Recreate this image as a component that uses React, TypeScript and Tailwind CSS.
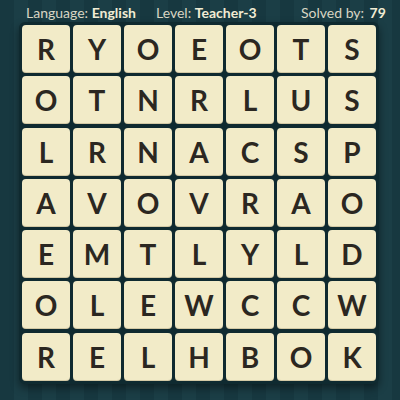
const rows = [
  "RYOEOTS",
  "OTNRLUS",
  "LRNACSP",
  "AVOVRAO",
  "EMTLYLD",
  "OLEWCCW",
  "RELHBOK",
];

export default function App() {
  return (
    <div
      className="w-[400px] h-[400px] overflow-hidden bg-[repeating-linear-gradient(90deg,#173840_0px,#173840_14px,#1b3e46_14px,#1b3e46_28px)] text-[#d9d5c3]"
      style={{ fontFamily: "Lato, 'Open Sans', sans-serif" }}
    >
      {/* Header */}
      <div className="h-[24px] flex items-center pl-[26px] text-[14px] leading-none pt-[2px] whitespace-nowrap">
        <span className="w-[130px]">
          Language: <b className="font-bold text-[#f1ecd4]">English</b>
        </span>
        <span className="w-[145px]">
          Level: <b className="font-bold text-[#f1ecd4]">Teacher-3</b>
        </span>
        <span>
          Solved by: <b className="font-bold text-[#f1ecd4] ml-[2px]">79</b>
        </span>
      </div>

      {/* Board */}
      <div className="ml-[19px] mt-[-2px] w-[360px] p-[3px] rounded-[6px] bg-[#0f2a30] shadow-[0_4px_8px_rgba(0,0,0,0.45)]">
        <div className="grid grid-cols-[repeat(7,48px)] gap-x-[3px] gap-y-[3.3px]">
          {rows.flatMap((row, r) =>
            row.split("").map((ch, c) => (
              <div
                key={`${r}-${c}`}
                className="h-[48px] rounded-[4px] bg-[#f2ebc8] flex items-center justify-center text-[28px] font-bold text-[#2b2721] shadow-[inset_0_-1px_0_rgba(120,100,60,0.25)]"
              >
                {ch}
              </div>
            ))
          )}
        </div>
      </div>
    </div>
  );
}
